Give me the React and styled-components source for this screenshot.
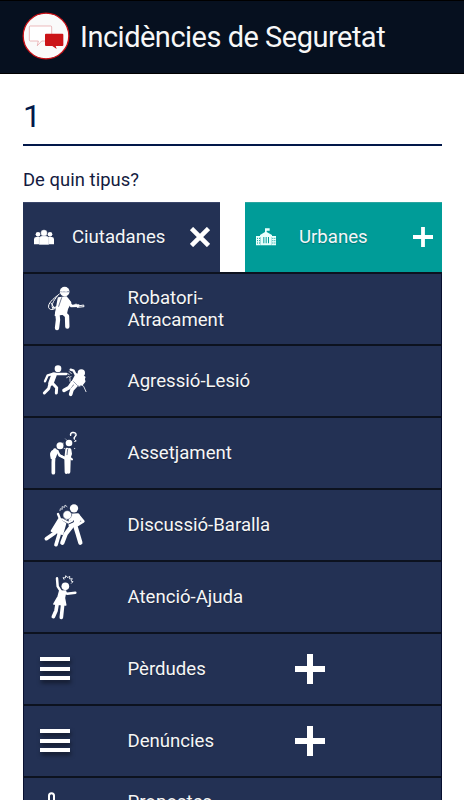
import React from 'react';
import styled, { createGlobalStyle } from 'styled-components';

const GlobalStyle = createGlobalStyle`
  * {
    box-sizing: border-box;
  }

  body {
    margin: 0;
    background: #fff;
    font-family: Roboto, sans-serif;
    overflow: hidden;
  }

  svg {
    display: block;
    flex: none;
  }
`;

const Screen = styled.div`
  height: 800px;
  overflow: hidden;
`;

const Header = styled.header`
  display: flex;
  align-items: center;
  height: 74px;
  padding: 0 22px;
  gap: 10px;
  background: #06101f;
  border-top: 1px solid #000;
  border-bottom: 1px solid #000;
`;

const Logo = styled.svg`
  margin-top: -3px;
`;

const Title = styled.h1`
  margin: 0;
  color: #f7f7f7;
  font-size: 29px;
  font-weight: 400;
  letter-spacing: -0.5px;
  white-space: nowrap;
`;

const Form = styled.main`
  padding: 22px 22px 0 23px;
`;

const Field = styled.div`
  height: 50px;
  border-bottom: 2px solid #02184a;
  color: #02184a;
  font-size: 32px;
  line-height: 40px;
`;

const Label = styled.p`
  margin: 22px 0 11px;
  color: #141b40;
  font-size: 18.4px;
  letter-spacing: 0.05px;
  line-height: 23px;
`;

const Tabs = styled.div`
  display: flex;
  justify-content: space-between;
`;

const Tab = styled.button`
  display: grid;
  grid-template-columns: ${props => (props.$open ? '38px 118px 20px' : '43px 114px 20px')};
  align-items: center;
  width: 197px;
  height: 70px;
  padding: 0 9px 2px 11px;
  border: 0;
  border-top: 1px solid ${props => (props.$open ? '#3a466a' : '#2aa5a0')};
  background: ${props => (props.$open ? '#233154' : '#009c98')};
  color: #f4f6f8;
  font-family: inherit;
  font-size: 18.6px;
  text-align: left;
  text-shadow: 0 1px 1px rgba(0, 0, 0, 0.25);
`;

const List = styled.ul`
  margin: 0;
  padding: 0;
  list-style: none;
`;

const Row = styled.li`
  display: grid;
  grid-template-columns: 92px 168px 44px;
  align-items: center;
  height: 72px;
  padding-left: 11px;
  border: 1px solid #081030;
  border-width: 2px 1px 0;
  border-top-color: #0c121f;
  background: #233154;
`;

const RowText = styled.span`
  padding-left: 0.5px;
  color: #f6f6f6;
  font-size: 18.6px;
  line-height: 22px;
  white-space: pre;
  text-shadow: 0 1px 1px rgba(0, 0, 0, 0.3);
`;

// Every figure shares a 60x70 slot, the offset sets its height inside it
const Figure = ({ offset, children }) => (
  <svg
    width="60"
    height="70"
    viewBox={`0 ${-offset} 180 210`}
    fill="none"
    stroke="#fff"
    strokeLinecap="round"
    strokeLinejoin="round"
  >
    {children}
  </svg>
);

const Robber = () => (
  <Figure offset={18}>
    <circle cx="89" cy="35" r="14.5" fill="#fff" stroke="none" />
    <path d="M78 35h22" stroke="#7d87a0" strokeWidth="4" />
    <path d="M80 35h5m4 0h7" strokeWidth="2.5" />
    <path d="M70 54l24-3 13 16-10 20-3 14-33 5 4-24z" fill="#fff" strokeWidth="4" />
    <path d="M98 60l11 18 21-1" strokeWidth="8" />
    <path d="M67 99l2 20-3 25" strokeWidth="13" />
    <path d="M84 97l12 11 1 32" strokeWidth="13" />
    <path d="M73 42C53 58 38 70 41 83c5 11 22 5 29-9M67 48C55 63 45 79 55 87" strokeWidth="3" />
    <path d="M48 69l10 15M75 60l-9 20-14 4" strokeWidth="3" />
    <path d="M80 53l-9 26" stroke="#233154" strokeWidth="2" />
    <path d="M119 75l10 2m-6-5v7l23-4 1 5-20 2" strokeWidth="3" />
  </Figure>
);

const Assault = () => (
  <Figure offset={27}>
    <circle cx="69" cy="41" r="10" fill="#fff" stroke="none" />
    <path d="M57 60l-9 24" strokeWidth="16" />
    <path d="M61 57h32" strokeWidth="8" />
    <path d="M53 57L38 61 30 79" strokeWidth="7" />
    <path d="M45 86l-4 15-13 13" strokeWidth="9" />
    <path d="M51 83l14 15-1 16" strokeWidth="9" />
    <path d="M102 58l-8-3m8 9l-7 4m10 3v8m3-14l-5 2m6-11l-6-6" strokeWidth="2.5" />
    <circle cx="139" cy="54" r="11" fill="#fff" stroke="none" />
    <path d="M125 58l-14 26 22 7 15-24z" fill="#fff" strokeWidth="7" />
    <path d="M122 59l-6-12-9-3" strokeWidth="7" />
    <path d="M144 66l4 13-7 9" strokeWidth="7" />
    <path d="M112 83l-10 15-15 8" strokeWidth="11" />
    <path d="M124 90l-13 14-4 14" strokeWidth="11" />
    <path d="M116 80l12 12 8 3" stroke="#66718c" strokeWidth="2" />
    <path d="M119 77l27 17 7 16" strokeWidth="2.5" />
  </Figure>
);

const Harassment = () => (
  <Figure offset={21}>
    <circle cx="75" cy="62" r="10.5" fill="#fff" stroke="none" />
    <path d="M60 75l-4 20-1 17v31" strokeWidth="11" />
    <path d="M58 75c-13 4-12 13-9 25l12-3 7-20z" fill="#fff" strokeWidth="4" />
    <path d="M67 78l6 13 18 9" strokeWidth="7" />
    <circle cx="102" cy="54" r="10" fill="#fff" stroke="none" />
    <path d="M96 73l-3 27 1 42M103 74l-2 67" strokeWidth="10" />
    <path d="M106 74l2 13-4 11 7 5" strokeWidth="6" />
    <path d="M75 91l18 9 5 5" strokeWidth="6" />
    <path d="M98 73l-2 16" stroke="#233154" strokeWidth="2" />
    <path d="M92 42l1 1m-9 11v1m35-6v1m0 20v1M88 70v1" strokeWidth="2.5" />
    <path d="M107 31c-3-9 12-12 16-4 3 7-9 8-5 15m4 5v1" strokeWidth="4.5" />
    <path d="M109 29c1-5 10-4 10 0" stroke="#8790a5" strokeWidth="1.5" />
  </Figure>
);

const Fight = () => (
  <Figure offset={21}>
    <circle cx="117" cy="34" r="12.5" fill="#fff" stroke="none" />
    <path d="M105 54l24-2 7 14-15 22-17-3z" fill="#fff" strokeWidth="7" />
    <path d="M130 55l15 18-18 11" strokeWidth="8" />
    <path d="M109 89L92 111l-10 26" strokeWidth="13" />
    <path d="M121 87l7 23 8 27" strokeWidth="13" />
    <path d="M72 66l22 3-12 42-32-9z" fill="#fff" strokeWidth="6" />
    <circle cx="97" cy="54" r="13" fill="#fff" stroke="#4d5976" strokeWidth="1.5" />
    <path d="M76 68l-7-17" strokeWidth="7" />
    <path d="M59 108L34 125M72 113l-9 30" strokeWidth="11" />
    <path d="M85 68l16 10 12-5" stroke="#233154" strokeWidth="8" />
    <path d="M83 68l17 9 12-6" strokeWidth="6" />
    <path d="M75 41l1-6 6 2-1-8 8 2 1-7 6 5" stroke="#cbd0da" strokeWidth="3" />
  </Figure>
);

const Help = () => (
  <Figure offset={24}>
    <circle cx="91" cy="49" r="11.5" fill="#fff" stroke="none" />
    <path d="M66 25l2 24 10 16" strokeWidth="7.5" />
    <path d="M74 64l18-1-4 21 4 21-35-3 13-23z" fill="#fff" strokeWidth="5" />
    <path d="M89 68l7 3 25-3" strokeWidth="7.5" />
    <path d="M66 104l-3 18-8 18M83 104l-4 38" strokeWidth="11" />
    <path d="M87 28l-3-5 7 1 1-7 7 6 5-5v9l8-1-4 7 6 2-5 5" stroke="#e4e7ed" strokeWidth="3" />
  </Figure>
);

const Menu = styled.svg`
  filter: drop-shadow(1px 3px 2px rgba(0, 0, 0, 0.5));
`;

const MenuIcon = () => (
  <Menu width="60" height="70" viewBox="0 0 60 70" fill="#fff">
    <path d="M5 23h30v4H5zM5 33h30v4H5zM5 42h30v4H5z" />
  </Menu>
);

const ProposalIcon = () => (
  <Figure offset={0}>
    <path d="M42 90V53c0-10 15-10 15 0v37" strokeWidth="6" />
  </Figure>
);

const PlusIcon = () => (
  <svg width="30" height="30" viewBox="0 0 30 30" stroke="#fff" strokeWidth="6">
    <path d="M0 15h30M15 0v30" />
  </svg>
);

const SmallPlus = () => (
  <svg width="20" height="20" viewBox="0 0 20 20" stroke="#fff" strokeWidth="3.8">
    <path d="M0 10h20M10 0v20" />
  </svg>
);

const Cross = () => (
  <svg width="20" height="20" viewBox="0 0 20 20" stroke="#fff" strokeWidth="4.6">
    <path d="M1.5 1.5l17 17M18.5 1.5l-17 17" />
  </svg>
);

const People = () => (
  <svg width="20" height="16" viewBox="0 0 60 48" fill="#fff">
    <circle cx="12" cy="16" r="7" />
    <circle cx="48" cy="16" r="7" />
    <path d="M0 46V31q0-7 7-7h11v22zM42 46V24h11q7 0 7 7v15z" />
    <circle cx="30" cy="12" r="10" stroke="#233154" strokeWidth="1" />
    <path d="M16 47V29q0-8 8-8h12q8 0 8 8v18z" stroke="#98a1b7" strokeWidth="1" />
  </svg>
);

const TownHall = () => (
  <svg width="20" height="18" viewBox="0 0 60 54" fill="#e9fffc">
    <path d="M27 12V1h14v7h-9v4l16 9v6H12v-6zM0 24h14v28H0zM46 24h14v28H46z" />
    <path d="M15 26h7v20h-7zM25 26h4v20h-4zM32 26h4v20h-4zM39 26h7v20h-7zM14 46h32v6H14z" />
    <path
      d="M3 31h3m3 0h3M3 38h3m3 0h3M3 45h3m3 0h3M49 31h3m3 0h3M49 38h3m3 0h3M49 45h3m3 0h3"
      stroke="#009c98"
      strokeWidth="3"
    />
  </svg>
);

const rows = [
  { text: 'Robatori-\nAtracament', Icon: Robber },
  { text: 'Agressió-Lesió', Icon: Assault },
  { text: 'Assetjament', Icon: Harassment },
  { text: 'Discussió-Baralla', Icon: Fight },
  { text: 'Atenció-Ajuda', Icon: Help },
  { text: 'Pèrdudes', Icon: MenuIcon, more: true },
  { text: 'Denúncies', Icon: MenuIcon, more: true },
  { text: 'Propostes\n ', Icon: ProposalIcon },
];

const App = () => (
  <Screen>
    <GlobalStyle />
    <Header>
      <Logo width="48" height="48" viewBox="0 0 144 144">
        <circle cx="72" cy="72" r="68.5" fill="#fafafa" stroke="#c91016" strokeWidth="4" />
        <path
          d="M25 42h61q3 0 3 3v39q0 3-3 3H59L46 101l3-14H25q-3 0-3-3V45q0-3 3-3z"
          fill="#fff"
          stroke="#d8777b"
          strokeWidth="1.5"
        />
        <path
          d="M72 65h49q3 0 3 3v31q0 3-3 3h-20l3 9-13-9H72q-3 0-3-3V68q0-3 3-3z"
          fill="#cb1418"
        />
      </Logo>
      <Title>Incidències de Seguretat</Title>
    </Header>
    <Form>
      <Field>1</Field>
      <Label>De quin tipus?</Label>
      <Tabs>
        <Tab $open>
          <People />
          <span>Ciutadanes</span>
          <Cross />
        </Tab>
        <Tab>
          <TownHall />
          <span>Urbanes</span>
          <SmallPlus />
        </Tab>
      </Tabs>
      <List>
        {rows.map(({ text, Icon, more }) => (
          <Row key={text}>
            <Icon />
            <RowText>{text}</RowText>
            {more && <PlusIcon />}
          </Row>
        ))}
      </List>
    </Form>
  </Screen>
);

export default App;
